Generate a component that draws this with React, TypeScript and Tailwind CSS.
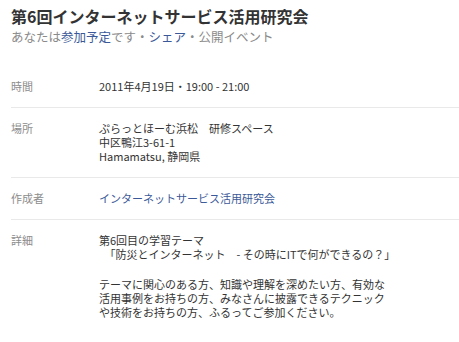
const font = { fontFamily: '"Noto Sans CJK JP", "Noto Sans", sans-serif' };

type Row = {
  label: string;
  body: React.ReactNode;
};

const rows: Row[] = [
  {
    label: "時間",
    body: <p>2011年4月19日・19:00 - 21:00</p>,
  },
  {
    label: "場所",
    body: (
      <>
        <p>ぷらっとほーむ浜松　研修スペース</p>
        <p>中区鴨江3-61-1</p>
        <p>Hamamatsu, 静岡県</p>
      </>
    ),
  },
  {
    label: "作成者",
    body: (
      <a href="#" className="text-[#3b5998]">
        インターネットサービス活用研究会
      </a>
    ),
  },
  {
    label: "詳細",
    body: (
      <>
        <p>第6回目の学習テーマ</p>
        <p>　「防災とインターネット　- その時にITで何ができるの？」</p>
        <p className="mt-[16px]">
          テーマに関心のある方、知識や理解を深めたい方、有効な
        </p>
        <p>活用事例をお持ちの方、みなさんに披露できるテクニック</p>
        <p>や技術をお持ちの方、ふるってご参加ください。</p>
      </>
    ),
  },
];

export default function App() {
  return (
    <div
      className="w-[459px] h-[342px] bg-white overflow-hidden pl-[11px] pt-[6px]"
      style={font}
    >
      {/* header */}
      <h1 className="text-[16px] leading-[20px] font-bold text-[#333333] whitespace-nowrap">
        第6回インターネットサービス活用研究会
      </h1>
      <p className="mt-[3px] text-[12.5px] leading-[16px] text-[#8a8a8a] whitespace-nowrap">
        あなたは<a href="#" className="text-[#3b5998]">参加予定</a>です・
        <a href="#" className="text-[#3b5998]">シェア</a>・公開イベント
      </p>

      {/* details */}
      <div className="mt-[21px]">
        {rows.map((row, i) => (
          <div
            key={row.label}
            className={`flex pt-[13px] pb-[14px] text-[11px] leading-[14px] ${
              i > 0 ? "border-t border-[#e9e9e9]" : ""
            }`}
          >
            <div className="w-[88px] shrink-0 text-[#8c8c8c]">{row.label}</div>
            <div className="text-[#333333] whitespace-nowrap">{row.body}</div>
          </div>
        ))}
      </div>
    </div>
  );
}
